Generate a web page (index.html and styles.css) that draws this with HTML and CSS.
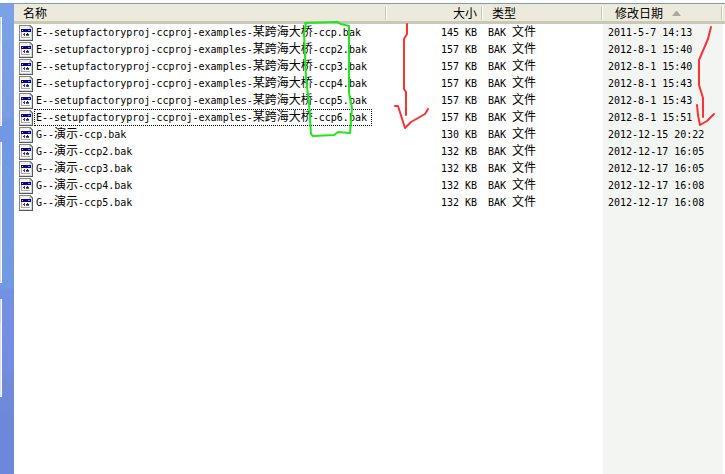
FILE: index.html
```html
<!DOCTYPE html>
<html lang="zh-CN">

<head>
    <meta charset="UTF-8">
    <meta name="viewport" content="width=device-width, initial-scale=1.0">
    <title>备份文件</title>
    <link rel="stylesheet" href="styles.css">
</head>

<body>
    <!-- File icon shared by all rows -->
    <svg class="defs" width="0" height="0" aria-hidden="true">
        <symbol id="fileIcon" viewBox="0 0 14 16" shape-rendering="crispEdges">
            <path d="M0 0h11l3 3v13H0z" fill="#848484" />
            <path d="M1 1h9v3h2v10H1z" fill="#fff" />
            <path d="M13 3h1v13H0v-1h13z" fill="#5a5a5a" />
            <path d="M12 4h1v11H1v-1h11z" fill="#d6d6d6" />
            <path d="M10 1l3 3h-3z" fill="#d6d6d6" />
            <path d="M1 1h8v2H1z" fill="#f1efe2" />
            <path d="M2 4h9v9H2z" fill="#a8a8b4" />
            <path d="M3 7h8v5H3z" fill="#fff" />
            <path d="M2 4h10v3H2z" fill="#000094" />
            <path d="M3 5h1v1H3z" fill="#ffe000" />
            <path d="M9 5h2v1H9z" fill="#8c8cc6" />
            <path d="M4 9h1V8h1v3H5v-1H4z" fill="#e00000" />
            <path d="M7 9h1V8h1v1h1v1H7z" fill="#1010f0" />
            <path d="M7 10h3v1H7z" fill="#00a040" />
        </symbol>
    </svg>

    <div class="explorer">
        <aside class="sidebar">
            <div class="panel"></div>
            <div class="panel panel-tall"></div>
            <div class="panel panel-short"></div>
        </aside>

        <main class="file-view">
            <table class="file-list">
                <colgroup>
                    <col>
                    <col class="col-size">
                    <col class="col-type">
                    <col class="col-date">
                    <col class="col-end">
                </colgroup>
                <thead>
                    <tr>
                        <th>名称</th>
                        <th class="size">大小</th>
                        <th>类型</th>
                        <th class="date">修改日期<svg class="sort-arrow" width="9" height="5" viewBox="0 0 9 5" aria-hidden="true"><path d="M0 5l4-5h1l4 5z" fill="#aca899" /></svg></th>
                        <th></th>
                    </tr>
                </thead>
                <tbody id="fileRows"></tbody>
            </table>

            <!-- Hand drawn marks over the list -->
            <svg class="mark mark-name" width="50" height="118" viewBox="304 20 50 118" aria-hidden="true">
                <path d="M305 23L337 22L341 24L349 26L349 93L352 108L350 133L338 132L334 135L313 136L311 134L309 103L306 78L304 33L306 23" stroke="#1ee81e" />
            </svg>
            <svg class="mark mark-size" width="36" height="108" viewBox="394 22 36 108" aria-hidden="true">
                <path d="M407 24L407 34L404 39L404 89L406 92L406 115M395 106L398 106L405 128L411 122L425 114L428 109" stroke="#fa3232" />
            </svg>
            <svg class="mark mark-date" width="20" height="102" viewBox="696 25 20 102" aria-hidden="true">
                <path d="M711 27L708 39L699 60L699 85L703 98L703 117M697 105L698 115L700 125L707 121L714 114" stroke="#fa3232" />
            </svg>
        </main>
    </div>

    <script src="script.js"></script>
</body>

</html>
```
FILE: styles.css
```css
html,
body {
    height: 100%;
}

body {
    box-sizing: border-box;
    margin: 0;
    padding-top: 3px;
    background: #fff;
    color: #000;
    font-family: "DejaVu Sans Mono", "Noto Sans CJK SC", monospace;
    font-size: 10px;
    line-height: 16px;
}

.defs {
    position: absolute;
}

.explorer {
    display: flex;
    box-sizing: border-box;
    height: 100%;
    border-top: 1px solid #7f9db9;
}

/* Task pane, only its right edge is visible */
.sidebar {
    flex: none;
    box-sizing: border-box;
    width: 14px;
    padding-top: 13px;
    background: linear-gradient(#7ba2e7, #7b9be3 24%, #7199e3 25%, #729ae3 60%, #7490e3 61%, #748ce2 78%, #718bd8 80%, #6b88da 90%);
}

.panel {
    box-sizing: border-box;
    width: 2px;
    height: 109px;
    margin-bottom: 16px;
    border-right: 1px solid #fff;
    border-bottom: 1px solid #fff;
    background: linear-gradient(#c6d3f7 24px, #d6dff7 24px);
}

.panel-tall {
    height: 141px;
}

.panel-short {
    height: 98px;
}

.file-view {
    position: relative;
    flex: 1;
}

.file-list {
    width: 100%;
    height: 100%;
    table-layout: fixed;
    border-collapse: separate;
    border-spacing: 0;
}

.col-size {
    width: 96px;
}

.col-type {
    width: 120px;
}

.col-date {
    width: 120px;
}

.col-end {
    width: 2px;
}

.file-list th,
.cjk {
    font-family: "Noto Sans CJK SC", sans-serif;
    font-size: 12px;
    font-weight: normal;
}

.cjk {
    line-height: 0;
}

.file-list th {
    height: 17px;
    padding: 0 0 0 9px;
    border-bottom: 3px solid #cbc7b8;
    background: linear-gradient(90deg, #c7c5b2 1px, #fff 1px) right 3px / 2px 13px no-repeat #ebeadb;
    text-align: left;
    white-space: nowrap;
}

.file-list .size {
    padding: 0 6px 0 0;
    text-align: right;
}

.file-list th.date {
    padding-left: 12px;
}

.file-list th:last-child {
    padding: 0;
    background: #ebeadb;
}

.sort-arrow {
    margin-left: 9px;
    vertical-align: 2px;
}

.file-list td {
    height: 17px;
    padding: 0 0 0 5px;
    line-height: 16px;
    white-space: nowrap;
}

.file-list td.date {
    background: #f3f5f2;
}

.file-list .filler td {
    height: auto;
}

.file {
    display: flex;
    align-items: center;
    gap: 1px;
    height: 17px;
}

.file-icon {
    flex: none;
    width: 14px;
    height: 16px;
}

.file-name {
    box-sizing: border-box;
    height: 17px;
    padding: 0 4px 0 1px;
    border: 1px solid transparent;
    line-height: 16px;
}

.focused {
    border: 1px dotted #000;
}

.mark {
    position: absolute;
    fill: none;
    stroke-width: 2;
    stroke-linecap: round;
    stroke-linejoin: round;
    overflow: visible;
    pointer-events: none;
}

.mark-name {
    top: 16px;
    left: 290px;
}

.mark-size {
    top: 18px;
    left: 380px;
}

.mark-date {
    top: 21px;
    right: 9px;
}
```
FILE: script.js
```js
const bridge = 'E--setupfactoryproj-ccproj-examples-某跨海大桥-';
const demo = 'G--演示-';

const files = [
    { name: bridge + 'ccp.bak', size: 145, date: '2011-5-7 14:13' },
    { name: bridge + 'ccp2.bak', size: 157, date: '2012-8-1 15:40' },
    { name: bridge + 'ccp3.bak', size: 157, date: '2012-8-1 15:40' },
    { name: bridge + 'ccp4.bak', size: 157, date: '2012-8-1 15:43' },
    { name: bridge + 'ccp5.bak', size: 157, date: '2012-8-1 15:43' },
    { name: bridge + 'ccp6.bak', size: 157, date: '2012-8-1 15:51', focused: true },
    { name: demo + 'ccp.bak', size: 130, date: '2012-12-15 20:22' },
    { name: demo + 'ccp2.bak', size: 132, date: '2012-12-17 16:05' },
    { name: demo + 'ccp3.bak', size: 132, date: '2012-12-17 16:05' },
    { name: demo + 'ccp4.bak', size: 132, date: '2012-12-17 16:08' },
    { name: demo + 'ccp5.bak', size: 132, date: '2012-12-17 16:08' }
];

// Chinese text is set larger than the Latin text
function markCjk(text) {
    return text.replace(/[\u4e00-\u9fff]+/g, '<span class="cjk">$&</span>');
}

const rows = files.map(file => `
    <tr>
        <td>
            <div class="file">
                <svg class="file-icon" aria-hidden="true"><use href="#fileIcon" /></svg>
                <span class="file-name${file.focused ? ' focused' : ''}">${markCjk(file.name)}</span>
            </div>
        </td>
        <td class="size">${file.size} KB</td>
        <td>${markCjk('BAK 文件')}</td>
        <td class="date">${file.date}</td>
        <td></td>
    </tr>`);

// Last row takes the height that is left
rows.push('<tr class="filler"><td></td><td></td><td></td><td class="date"></td><td></td></tr>');

document.getElementById('fileRows').innerHTML = rows.join('');
```
